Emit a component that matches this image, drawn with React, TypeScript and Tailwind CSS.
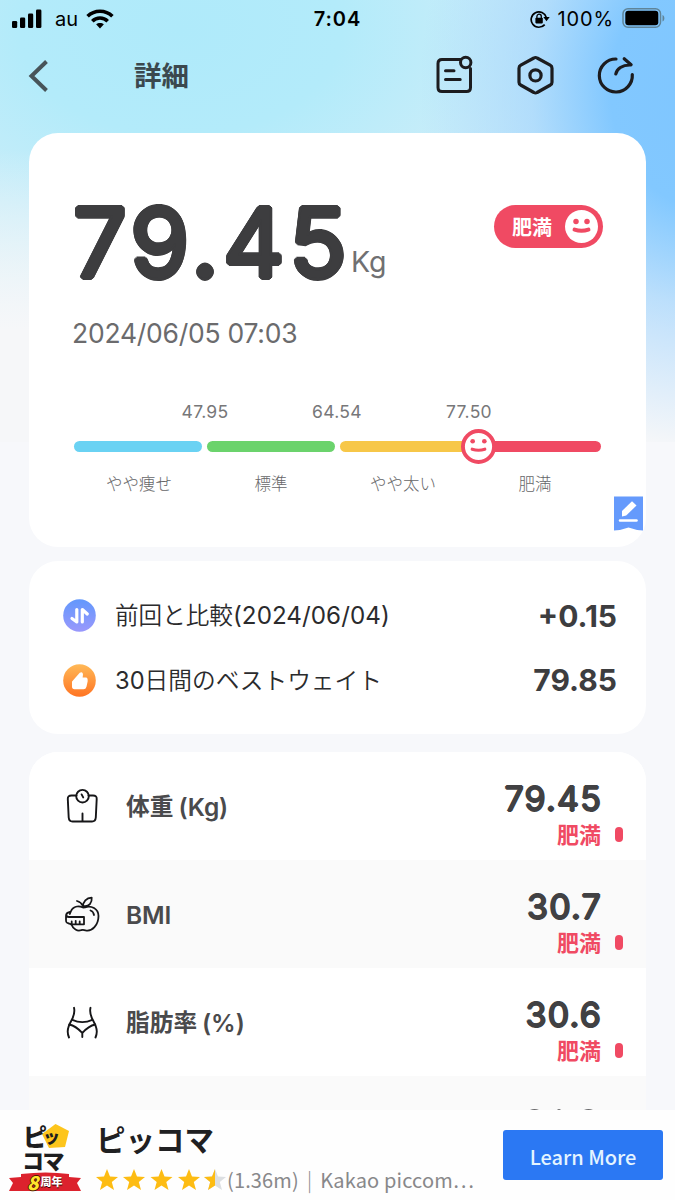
import React from "react";

const CJK = "font-[Inter,'Noto_Sans_CJK_JP',sans-serif]";

// Offset copies of the glyphs give the numerals their rounded terminals.
const ROUND_LG =
  "[text-shadow:2.6px_0,-2.6px_0,0_2.6px,0_-2.6px,2.25px_1.3px,2.25px_-1.3px,-2.25px_1.3px,-2.25px_-1.3px,1.3px_2.25px,1.3px_-2.25px,-1.3px_2.25px,-1.3px_-2.25px,1.5px_0,-1.5px_0,0_1.5px,0_-1.5px]";
const ROUND_SM =
  "[text-shadow:1px_0,-1px_0,0_1px,0_-1px]";

function StatusBar() {
  return (
    <div className="flex h-[38px] items-center justify-between pr-[10px] pl-3 text-black">
      <div className="flex w-[260px] items-center">
        <svg width="30" height="20" viewBox="0 0 30 20">
          <rect x="0" y="12" width="5.2" height="7" rx="1.3" />
          <rect x="8" y="8.5" width="5.2" height="10.5" rx="1.3" />
          <rect x="16" y="4.5" width="5.2" height="14.5" rx="1.3" />
          <rect x="24" y="0.5" width="5.4" height="18.5" rx="1.3" />
        </svg>
        <span className="ml-[13px] text-[20px] leading-6">au</span>
        <svg className="ml-[8px]" width="28" height="20" viewBox="0 0 28 20">
          <g fill="none" stroke="black" strokeWidth="3.6">
            <path d="M1.6 7.3 C8.5 0.6 19.5 0.6 26.4 7.3" />
            <path d="M6.3 12.2 C10.6 8 17.4 8 21.7 12.2" />
          </g>
          <path d="M10.1 15.3 C12.3 13.4 15.7 13.4 17.9 15.3 L14 19.6 Z" />
        </svg>
      </div>
      <span className="-ml-[2px] text-[20px] font-semibold leading-6 tracking-[0.9px]">7:04</span>
      <div className="flex w-[260px] items-center justify-end">
        <svg width="20" height="20" viewBox="0 0 20 20">
          <path d="M14.7 15.6 A7.7 7.7 0 1 1 16.3 8.5" fill="none" stroke="black" strokeWidth="1.7" />
          <path d="M13.3 8 H19.7 L16.5 12.3 Z" />
          <rect x="5.4" y="8.8" width="7.4" height="5.6" rx=".8" />
          <path d="M6.9 9 V7.4 A2.2 2.2 0 0 1 11.3 7.4 V9" fill="none" stroke="black" strokeWidth="1.3" />
        </svg>
        <span className="ml-[7px] text-[20px] leading-6 tracking-[0.9px]">100%</span>
        <svg className="ml-[8px]" width="43" height="22" viewBox="0 0 43 22">
          <rect x="1" y="0.8" width="37.5" height="18.4" rx="5" fill="none" stroke="#5f8499" strokeWidth="1.5" />
          <rect x="3.3" y="2.8" width="33" height="14.4" rx="3" />
          <path d="M40.5 7 V13.5 C43 12.5 43 8 40.5 7" fill="#5f8499" />
        </svg>
      </div>
    </div>
  );
}

function Header() {
  return (
    <div className="flex h-[95px] items-start pl-[28px]">
      <svg className="mt-[21px]" width="22" height="34" viewBox="0 0 22 34">
        <path d="M18.5 2.5 L3.5 17 L18.5 31.5" fill="none" stroke="#485459" strokeWidth="4" />
      </svg>
      <h1 className="mt-[20px] ml-[84px] w-[301px] text-[27.5px] font-bold leading-[36px] text-[#3b484e]">詳細</h1>
      <svg className="mt-[16px]" width="40" height="42" viewBox="0 0 40 42" fill="none" stroke="#1c1c1f" strokeWidth="3" strokeLinecap="round" strokeLinejoin="round">
        <path d="M25.5 5.5 H7 Q3 5.5 3 9.5 V33.5 Q3 37.5 7 37.5 H31.5 Q35.5 37.5 35.5 33.5 V14.5" />
        <circle cx="30.7" cy="8.5" r="5.2" />
        <path d="M10.5 16.7 H19 M10.5 25.5 H25.2" />
      </svg>
      <svg className="ml-[41px] mt-[16px]" width="40" height="42" viewBox="0 0 40 42" fill="none" stroke="#1c1c1f" strokeWidth="3.2" strokeLinejoin="round">
        <path d="M17.9 4 Q19.5 3 21.1 4 L34.2 11.2 Q36 12.2 36 14.2 V28.2 Q36 30 34.4 31 L21.1 38.5 Q19.5 39.5 17.9 38.5 L4.6 31 Q3 30 3 28.2 V14.2 Q3 12.2 4.8 11.2 Z" />
        <circle cx="19.5" cy="21.4" r="5.6" />
      </svg>
      <svg className="ml-[40px] mt-[16px]" width="42" height="42" viewBox="0 0 42 42" fill="none" stroke="#1c1c1f" strokeWidth="3.2" strokeLinecap="round" strokeLinejoin="round">
        <path d="M20 5 A16.5 16.5 0 1 0 36.3 20.5" />
        <path d="M19.8 20 C20.8 15 26 10.7 34.7 11 M28.2 4.8 L35.1 10.8" />
      </svg>
    </div>
  );
}

function Face({ size, border }: { size: number; border: boolean }) {
  return (
    <svg width={size} height={size} viewBox="0 0 36 36" fill="none" stroke="#f04a63" strokeLinecap="round">
      <circle cx="18" cy="18" r={border ? 16 : 18} fill="white" strokeWidth={border ? 4 : 0} />
      <circle cx="12" cy="12.6" r={border ? 2.4 : 3} fill="#f04a63" stroke="none" />
      <circle cx="24" cy="12.6" r={border ? 2.4 : 3} fill="#f04a63" stroke="none" />
      <path d={border ? "M11.5 20.8 Q18 23 24.5 20.8" : "M10.5 21.4 Q18 24 25.5 21.4"} strokeWidth={border ? 3.2 : 4.5} />
    </svg>
  );
}

const segments = [
  { color: "bg-[#6ad2f3]", label: "やや痩せ" },
  { color: "bg-[#6bd36c]", label: "標準" },
  { color: "bg-[#f7c748]", label: "やや太い" },
  { color: "bg-[#f04a63]", label: "肥満" },
];

function WeightCard() {
  return (
    <section className="relative mx-[29px] h-[413.5px] rounded-[29px] bg-white">
      <div className="flex h-[176px] items-start justify-between pr-[43px] pl-[44px] pt-[58px]">
        <div className="flex items-start">
          <span className={`w-[275px] text-[95px] font-normal leading-[104px] tracking-[4.5px] text-[#3d3d3f] ${ROUND_LG}`}>79.45</span>
          <span className="ml-[3px] mt-[54px] text-[28.5px] leading-[34px] text-[#707072]">Kg</span>
        </div>
        <div className="mt-[14px] flex h-[43px] w-[109px] items-center justify-between rounded-full bg-[#f04a63] pr-[5px] pl-[18px]">
          <span className="mt-[2px] text-[20px] font-bold leading-6 text-white">肥満</span>
          <Face size={33} border={false} />
        </div>
      </div>
      <p className="pl-[43px] text-[26.5px] leading-[48px] tracking-[-0.25px] text-[#6b6b6d]">2024/06/05 07:03</p>
      <div className="mt-[43px] ml-[110px] grid w-[396px] grid-cols-3 text-center text-[17.5px] leading-6 tracking-[0.3px] text-[#777779]">
        <span>47.95</span>
        <span>64.54</span>
        <span>77.50</span>
      </div>
      <div className="relative mx-[45px] mt-[17px] grid grid-cols-[128px_128px_128px_128px] gap-[5px]">
        {segments.map((s) => (
          <div key={s.label} className={`h-[11px] rounded-full ${s.color}`} />
        ))}
        <div className="absolute top-0 left-[380px] h-[11px] w-[24px] bg-[#f7c748]" />
        <div className="absolute top-0 left-[405px] h-[11px] w-[24px] bg-[#f04a63]" />
        <div className="absolute -top-[12px] left-[387px]">
          <Face size={35} border />
        </div>
      </div>
      <div className="mt-[16px] ml-[44px] grid w-[528px] grid-cols-4 text-center text-[16.5px] font-light leading-[32px] text-[#666668]">
        {segments.map((s) => (
          <span key={s.label}>{s.label}</span>
        ))}
      </div>
      <svg className="absolute top-[363px] right-[3px]" width="29" height="35" viewBox="0 0 29 35">
        <path d="M0 0.5 H29 V34.5 Q21 34 14.5 31.5 Q8 34 0 34.5 Z" fill="#659afc" />
        <path d="M8 20.5 V15 L18 5.3 L22.5 9.5 L12.2 19.5 Z" fill="white" />
        <path d="M6 24.5 H22.5" stroke="white" strokeWidth="2.5" strokeLinecap="round" />
      </svg>
    </section>
  );
}

function CompareCard() {
  return (
    <section className="mx-[29px] mt-[14.5px] h-[173px] rounded-[29px] bg-white pt-[22px] pr-[29px] pl-[34px] text-[#2b2b2d]">
      <div className="flex h-[65px] items-center">
        <svg width="33" height="33" viewBox="0 0 33 33">
          <defs>
            <linearGradient id="swap" x2="0" y2="1">
              <stop stopColor="#6298fc" />
              <stop offset="1" stopColor="#9a98fc" />
            </linearGradient>
          </defs>
          <circle cx="16.5" cy="16.5" r="16.3" fill="url(#swap)" />
          <path d="M13.8 10.5 V23 L9 19.5 M19.3 23 V10.5 L24.3 15" fill="none" stroke="white" strokeWidth="3.2" strokeLinecap="round" strokeLinejoin="round" />
        </svg>
        <span className="ml-[19px] mt-[1px] grow text-[23.6px] leading-8">
          <span className="font-[350]">前回と比較</span>
          <span className="text-[24.2px] tracking-[0.05px]">(2024/06/04)</span>
        </span>
        <span className="text-[30px] font-bold leading-8 text-[#3d3d3f]">+0.15</span>
      </div>
      <div className="flex h-[65px] items-center">
        <svg width="33" height="33" viewBox="0 0 33 33">
          <defs>
            <linearGradient id="best" x2="0" y2="1">
              <stop stopColor="#ffb957" />
              <stop offset="1" stopColor="#ff7423" />
            </linearGradient>
          </defs>
          <circle cx="16.5" cy="16.5" r="16.3" fill="url(#best)" />
          <path d="M10 18 L17.5 9.5 Q18.8 8.5 19 10.5 L18.5 14.5 H23 Q24 15 23.7 17 L22.5 22.5 Q22 24.3 20.5 24.3 H11.5 Q10 24.3 10 22.5 Z" fill="white" stroke="white" strokeWidth="2" strokeLinejoin="round" />
        </svg>
        <span className="ml-[19px] grow text-[23.7px] leading-8">
          <span>30</span>
          <span className="font-[350]">日間のベストウェイト</span>
        </span>
        <span className="-mt-[1px] text-[30px] font-bold leading-8 text-[#3d3d3f]">79.85</span>
      </div>
    </section>
  );
}

function ScaleIcon() {
  return (
    <svg width="36" height="36" viewBox="0 0 36 36" fill="none" stroke="#161618" strokeWidth="1.9" strokeLinecap="round" strokeLinejoin="round">
      <path d="M12.5 7.5 H7.5 Q3.5 7.5 3.8 11 L4.7 29.5 Q5 33.5 8.5 33.5 H28 Q31.5 33.5 31.8 29.5 L32.7 11 Q33 7.5 29 7.5 H24.5" />
      <circle cx="18.5" cy="8.2" r="6.3" />
      <path d="M17.6 6.4 L19.2 9.4 M18.5 25.5 V33" />
    </svg>
  );
}

function AppleIcon() {
  return (
    <svg width="36" height="36" viewBox="0 0 36 36" fill="none" stroke="#161618" strokeWidth="1.8" strokeLinecap="round" strokeLinejoin="round">
      <path d="M19 11.5 C14 9.5 9 10.5 6.8 15.5 L5.8 18 M7.5 28.5 C9 33 13.5 35.5 17 34.2 Q19 33.4 21.5 34.4 C28 36 34.5 29 34.5 20 C34.5 12.5 27 9 21 11.3 L19 11.5" />
      <path d="M19 11 C18.8 5.5 22.5 2 27.7 1.7 C28.2 7 25 10.8 20 10.2 M19 10 Q17 6 13 5 M26.5 14.5 Q29.5 15.5 30 19" />
      <path d="M6 16 C2.5 16.5 1.8 19 2 21 V24 C2 26.5 2.5 27 5 27.5 L7 28.3 H20 V21 H5 Q2.5 21 2.3 18.8 M7.7 27.8 V25.5 M11.7 27.8 V24.8 M15.7 27.8 V25.5" />
    </svg>
  );
}

function BodyIcon() {
  return (
    <svg width="36" height="36" viewBox="0 0 36 36" fill="none" stroke="#161618" strokeWidth="1.9" strokeLinecap="round" strokeLinejoin="round">
      <path d="M10 3.8 C12.5 14 3.7 18 3.7 27.5 Q3.7 30.5 5 33.5 M26.5 3.8 C24 14 32.8 18 32.8 27.5 Q32.8 30.5 31.5 33.5" />
      <path d="M8.3 15.8 Q18.3 20.5 28.3 15.8 M5.3 20.5 C12 22 15.5 26 18.3 29 C21 26 24.5 22 31.2 20.5 M18.3 29 V33" />
    </svg>
  );
}

const metrics = [
  { name: "体重", unit: "(Kg)", value: "79.45", icon: <ScaleIcon /> },
  { name: "", unit: "BMI", value: "30.7", icon: <AppleIcon /> },
  { name: "脂肪率", unit: "(%)", value: "30.6", icon: <BodyIcon /> },
];

function Metrics() {
  return (
    <section className="mx-[29px] mt-[18px] overflow-hidden rounded-t-[29px] bg-white">
      {metrics.map((m, i) => (
        <div key={m.unit} className={`flex h-[108px] justify-between pl-[35px] ${i % 2 ? "bg-[#fafafa]" : "bg-white"}`}>
          <div className="flex items-center">
            {m.icon}
            <span className="ml-[26px] mt-[2px] flex gap-[5px] text-[23.7px] leading-8 text-[#4a4a4c]">
              {m.name && <span className="font-bold">{m.name}</span>}
              <span className="text-[24.5px] font-semibold tracking-[-0.1px]">{m.unit}</span>
            </span>
          </div>
          <div className="flex pt-[28px]">
            <div className="flex flex-col items-end">
              <span className={`-mr-[1px] text-[34px] font-normal leading-[38px] tracking-[1.2px] text-[#414143] ${ROUND_SM}`}>{m.value}</span>
              <span className="pt-[1px] text-[22px] font-bold leading-[33px] text-[#f04a63]">肥満</span>
            </div>
            <span className="mt-[47px] mr-[23px] ml-[14px] h-[15px] w-[8px] rounded-[4px] bg-[#f04a63]" />
          </div>
        </div>
      ))}
      <div className="flex h-[34px] items-end justify-end bg-[#fafafa] pr-[48px]">
        <svg width="74" height="2" viewBox="0 0 74 2" fill="#6a6a6c">
          <path d="M6 2 Q10.5 0 15 2 Z M33 2 Q35 0 37 2 Z M60 2 Q64.5 0 69 2 Z" />
        </svg>
      </div>
    </section>
  );
}

const STAR = "M11 0 L14 7.5 L22 8 L15.8 13 L18 21 L11 16.6 L4 21 L6.2 13 L0 8 L8 7.5 Z";

function Banner() {
  return (
    <footer className="flex h-[90px] bg-[#fefefe] pl-[8px] font-['Noto_Sans_CJK_JP',sans-serif]">
      <div className="relative h-[90px] w-[74px] font-black text-[#1d1d1f]">
        <svg className="absolute top-[13px] left-[33px]" width="29" height="27" viewBox="0 0 29 27">
          <path d="M14.5 1 L28 8 L24 24 L8 25 L1 11 Z" fill="#fdc51c" />
        </svg>
        <div className="absolute top-[14px] left-[15px] flex items-center leading-[24px]">
          <span className="w-[20px] text-[24px]">ピ</span>
          <span className="text-[17px]">ッ</span>
        </div>
        <div className="absolute top-[38px] left-[14px] text-[22px] leading-[22px] tracking-[-1.5px]">コマ</div>
        <svg className="absolute top-[61px] left-0" width="74" height="22" viewBox="0 0 74 22">
          <path d="M1 7 L13 6 V3 Q38 0 61 3 V6 L73 7 L69 12 L73 20 H1 L5 12 Z" fill="#dc222d" />
        </svg>
        <div className="absolute top-[61px] left-[19px] flex items-center leading-[21px]">
          <span className="text-[19px] text-[#ffe52d] italic [text-shadow:-1px_0_#4a1800,1px_0_#4a1800,0_1px_#4a1800,0_-1px_#4a1800]">8</span>
          <span className="ml-[2px] text-[11px] text-white [text-shadow:0_1px_#3a0000]">周年</span>
        </div>
      </div>
      <div className="ml-[14px] w-[407px] pt-[8px]">
        <div className="text-[29.5px] font-bold leading-[40px] text-[#202022]">ピッコマ</div>
        <div className="flex items-center pt-[9px]">
          <svg className="mt-[2px]" width="131" height="24" viewBox="0 0 131 24" fill="#fdbc13">
            <path d={STAR} />
            <path d={STAR} transform="translate(27)" />
            <path d={STAR} transform="translate(54.5)" />
            <path d={STAR} transform="translate(82)" />
            <path d={STAR} transform="translate(108)" fill="#dcdfe2" />
            <path d="M119 0 V16.6 L112 21 L114.2 13 L108 8 L116 7.5 Z" />
          </svg>
          <span className="flex text-[20px] leading-[26px] tracking-[0.15px] text-[#88888a]">
            <span>(1.36m)</span>
            <span className="mx-[8px] font-light">|</span>
            <span>Kakao piccom⋯</span>
          </span>
        </div>
      </div>
      <button className="mt-[20px] flex h-[50px] w-[160px] items-center justify-center rounded-[3px] bg-[#2b78f3] pt-[3px] text-[20px] font-medium leading-[30px] text-[#e4f4ff]">Learn More</button>
    </footer>
  );
}

export default function App() {
  return (
    <div className={`h-[1200px] w-[675px] overflow-hidden bg-[#f7f8fb] ${CJK}`}>
      <main className="h-[1110px] overflow-hidden bg-[linear-gradient(to_bottom,transparent_442px,#f7f8fb_442px),radial-gradient(ellipse_280px_360px_at_700px_90px,#7fc6ff_0%,#82c8ff_32%,#a4d5fdb0_60%,#cfe8fb00_100%),linear-gradient(to_bottom,#f6f7f900_0px,#f6f7f900_150px,#f6f7f9c0_280px,#f6f7f9_330px),radial-gradient(ellipse_460px_300px_at_180px_30px,#afeafa_0%,#b3ebfa_35%,#c9edf9_70%,#d8f0f800_100%),linear-gradient(#d8f0f8,#d8f0f8)]">
        <StatusBar />
        <Header />
        <WeightCard />
        <CompareCard />
        <Metrics />
      </main>
      <Banner />
    </div>
  );
}
